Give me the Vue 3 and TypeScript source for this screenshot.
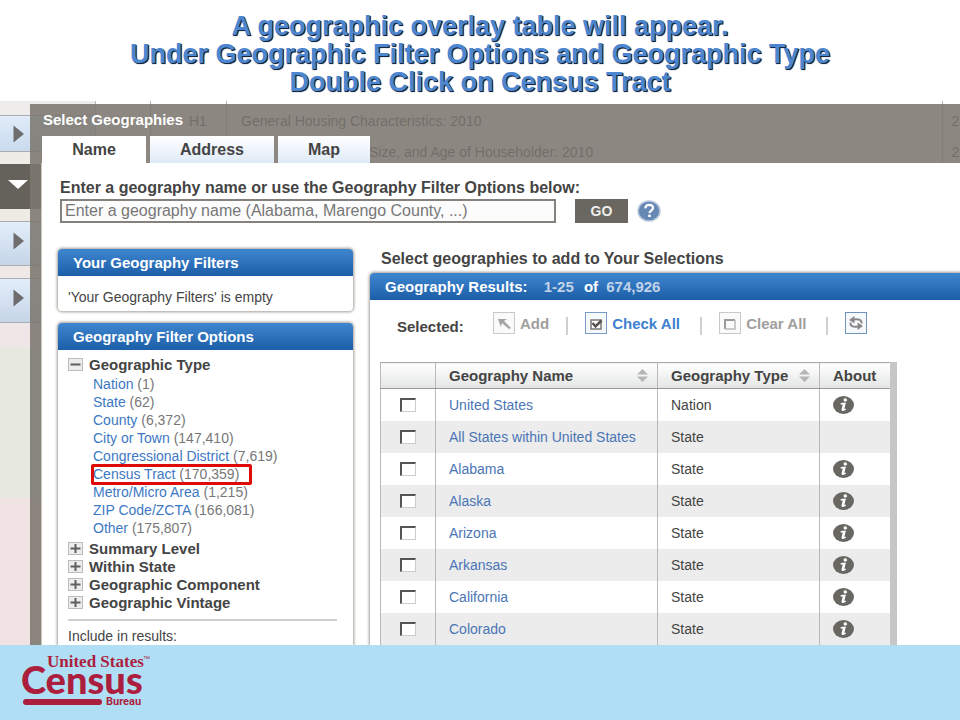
<script setup lang="ts">
import { ref } from 'vue'

interface TypeOption {
  name: string
  count: string
  marked?: boolean
}

interface Geography {
  name: string
  type: string
  info: boolean
}

const tabs = ['Name', 'Address', 'Map']
const activeTab = ref('Name')
const query = ref('Enter a geography name (Alabama, Marengo County, ...)')

const typeOptions: TypeOption[] = [
  { name: 'Nation', count: '1' },
  { name: 'State', count: '62' },
  { name: 'County', count: '6,372' },
  { name: 'City or Town', count: '147,410' },
  { name: 'Congressional District', count: '7,619' },
  { name: 'Census Tract', count: '170,359', marked: true },
  { name: 'Metro/Micro Area', count: '1,215' },
  { name: 'ZIP Code/ZCTA', count: '166,081' },
  { name: 'Other', count: '175,807' },
]

const closedGroups = ['Summary Level', 'Within State', 'Geographic Component', 'Geographic Vintage']

const geographies: Geography[] = [
  { name: 'United States', type: 'Nation', info: true },
  { name: 'All States within United States', type: 'State', info: false },
  { name: 'Alabama', type: 'State', info: true },
  { name: 'Alaska', type: 'State', info: true },
  { name: 'Arizona', type: 'State', info: true },
  { name: 'Arkansas', type: 'State', info: true },
  { name: 'California', type: 'State', info: true },
  { name: 'Colorado', type: 'State', info: true },
]

const checked = ref<string[]>([])
</script>

<template>
  <div class="slide">
    <header class="headline">
      <h1>
        A geographic overlay table will appear.<br />
        Under Geographic Filter Options and Geographic Type<br />
        Double Click on Census Tract
      </h1>
    </header>

    <main class="stage">
      <div class="backdrop">
        <nav class="rail">
          <button class="rail-item" type="button" aria-label="Expand topics">
            <svg width="12" height="18" viewBox="0 0 12 18"><path d="M0.5 0.5 11 9 0.5 17.5Z" fill="#6f6c6e" /></svg>
          </button>
          <button class="rail-item current" type="button" aria-label="Collapse geographies">
            <svg width="20" height="9" viewBox="0 0 20 9"><path d="M0 0H20L10 9Z" fill="#fff" /></svg>
          </button>
          <button class="rail-item" type="button" aria-label="Expand race groups">
            <svg width="12" height="18" viewBox="0 0 12 18"><path d="M0.5 0.5 11 9 0.5 17.5Z" fill="#6f6c6e" /></svg>
          </button>
          <button class="rail-item" type="button" aria-label="Expand industry codes">
            <svg width="12" height="18" viewBox="0 0 12 18"><path d="M0.5 0.5 11 9 0.5 17.5Z" fill="#6f6c6e" /></svg>
          </button>
          <div class="rail-rest"></div>
        </nav>
        <table class="under">
          <colgroup><col class="u-check" /><col class="u-id" /><col /><col class="u-year" /></colgroup>
          <tbody>
            <tr><td><span class="u-box"></span></td><td class="u-code">H1</td><td>General Housing Characteristics: 2010</td><td class="u-last">2</td></tr>
            <tr><td></td><td></td><td class="u-tail">Size, and Age of Householder: 2010</td><td class="u-last">2</td></tr>
          </tbody>
        </table>
      </div>

      <section class="dialog">
        <h2 class="dialog-title">Select Geographies</h2>
        <div class="tabs" role="tablist">
          <button
            v-for="tab in tabs"
            :key="tab"
            type="button"
            role="tab"
            class="tab"
            :class="[tab.toLowerCase(), { active: tab === activeTab }]"
            :aria-selected="tab === activeTab"
            @click="activeTab = tab"
          >{{ tab }}</button>
        </div>

        <div class="sheet">
          <form class="search" @submit.prevent>
            <label for="geo-name">Enter a geography name or use the Geography Filter Options below:</label>
            <div class="search-row">
              <input id="geo-name" v-model="query" type="text" />
              <button class="go" type="submit">GO</button>
              <button class="plain help" type="button" aria-label="Help">
                <svg width="24" height="22" viewBox="0 0 24 22">
                  <ellipse cx="12" cy="11" rx="11" ry="10" fill="#6688b4" stroke="#b9c9dd" stroke-width="1.5" />
                  <path d="M8.3 8.4C8.5 5.8 10 4.9 12.1 4.9c2.200 0 3.900 1.100 3.900 3.100 0 2.500-3.500 2.600-3.500 5" fill="none" stroke="#fff" stroke-width="2.200" />
                  <rect x="11.200" y="14.600" width="2.600" height="2.400" fill="#fff" />
                </svg>
              </button>
            </div>
          </form>

          <div class="columns">
            <aside class="filters">
              <section class="card">
                <h3 class="bar">Your Geography Filters</h3>
                <p class="empty">'Your Geography Filters' is empty</p>
              </section>
              <section class="card options">
                <h3 class="bar">Geography Filter Options</h3>
                <div class="tree">
                  <div>
                    <button class="plain group" type="button" aria-expanded="true">
                      <svg width="15" height="13" viewBox="0 0 15 13"><rect x="0.5" y="0.5" width="14" height="12" fill="#ededed" stroke="#bcbcbc" /><path d="M2.500 6.500h10" stroke="#605f5d" stroke-width="2" /></svg>
                      Geographic Type
                    </button>
                    <ul>
                      <li v-for="option in typeOptions" :key="option.name">
                        <span :class="{ marked: option.marked }"><a href="#">{{ option.name }}</a> ({{ option.count }})</span>
                      </li>
                    </ul>
                  </div>
                  <button v-for="group in closedGroups" :key="group" class="plain group" type="button" aria-expanded="false">
                    <svg width="15" height="13" viewBox="0 0 15 13"><rect x="0.5" y="0.5" width="14" height="12" fill="#ededed" stroke="#bcbcbc" /><path d="M2.500 6.500h10M7.500 2v9" stroke="#605f5d" stroke-width="2" /></svg>
                    {{ group }}
                  </button>
                </div>
                <p class="include">Include in results:</p>
              </section>
            </aside>

            <section class="results">
              <h3 class="hint">Select geographies to add to Your Selections</h3>
              <div class="results-card">
                <h3 class="bar">Geography Results: <span class="num range">1-25</span> of <span class="num">674,926</span></h3>
                <div class="toolbar">
                  <span class="selected">Selected:</span>
                  <button class="plain tool" type="button" disabled>
                    <svg width="22" height="22" viewBox="0 0 22 22"><rect x="0.5" y="0.5" width="21" height="21" fill="#fafafa" stroke="#c9c9c9" /><path d="M5 7h9l-3 2 7 7-2 1-7-6-1 4Z" fill="#a5a3a1" /></svg>
                    Add
                  </button>
                  <i class="rule"></i>
                  <button class="plain tool on" type="button" @click="checked = geographies.map((g) => g.name)">
                    <svg width="22" height="22" viewBox="0 0 22 22"><rect x="0.5" y="0.5" width="21" height="21" fill="#f6f9fc" stroke="#7b9cc9" /><rect x="6" y="8" width="10" height="9" fill="#fff" stroke="#777" stroke-width="1.500" /><path d="M7.500 11 10.500 14.500 16.500 8.500" fill="none" stroke="#55524f" stroke-width="2.500" /></svg>
                    Check All
                  </button>
                  <i class="rule"></i>
                  <button class="plain tool clear" type="button" @click="checked = []">
                    <svg width="22" height="22" viewBox="0 0 22 22"><rect x="0.5" y="0.5" width="21" height="21" fill="#fafafa" stroke="#c9c9c9" /><path d="M6 17V8h10" fill="none" stroke="#9c9a98" stroke-width="2" /><path d="M16 8v9H6" fill="none" stroke="#bbb" stroke-width="1.500" /></svg>
                    Clear All
                  </button>
                  <i class="rule"></i>
                  <button class="plain tool" type="button" aria-label="Refresh">
                    <svg width="22" height="22" viewBox="0 0 22 22"><rect x="0.5" y="0.5" width="21" height="21" fill="#f6f9fc" stroke="#6f93bb" /><path d="M16.500 11.500C17 8 14 6.500 8.500 7.500" fill="none" stroke="#8a8886" stroke-width="2" /><path d="M9.500 4 4 8l5.500 3.500Z" fill="#8a8886" /><path d="M5.500 10.500C5 14 8 15.500 13 14.500" fill="none" stroke="#8a8886" stroke-width="2" /><path d="M12.500 18 18 14l-5.500-3.500Z" fill="#8a8886" /></svg>
                  </button>
                </div>

                <div class="table-frame">
                  <table class="grid">
                    <colgroup><col class="c-check" /><col class="c-name" /><col class="c-type" /><col class="c-about" /></colgroup>
                    <thead>
                      <tr>
                        <th></th>
                        <th><span class="sort">Geography Name <svg width="11" height="13" viewBox="0 0 11 13"><path d="M5.500 0 11 5.500H0ZM0 7.500h11L5.500 13Z" fill="#b5b5b5" /></svg></span></th>
                        <th><span class="sort">Geography Type <svg width="11" height="13" viewBox="0 0 11 13"><path d="M5.500 0 11 5.500H0ZM0 7.500h11L5.500 13Z" fill="#b5b5b5" /></svg></span></th>
                        <th>About</th>
                      </tr>
                    </thead>
                    <tbody>
                      <tr v-for="geo in geographies" :key="geo.name">
                        <td class="pick"><input v-model="checked" type="checkbox" :value="geo.name" :aria-label="geo.name" /></td>
                        <td><a href="#">{{ geo.name }}</a></td>
                        <td>{{ geo.type }}</td>
                        <td>
                          <button v-if="geo.info" class="plain info" type="button" :aria-label="'About ' + geo.name">
                            <svg width="21" height="18" viewBox="0 0 21 18">
                              <ellipse cx="10.500" cy="9" rx="10.500" ry="9" fill="#696762" />
                              <ellipse cx="12.300" cy="3.900" rx="1.800" ry="1.600" fill="#fff" />
                              <path d="M7.700 7.100 12.900 6.400 11.300 12.900 13 12.500 12.600 13.900Q8.600 16 8.500 13.700L9.700 8.500 7.500 8.500Z" fill="#fff" />
                            </svg>
                          </button>
                        </td>
                      </tr>
                    </tbody>
                  </table>
                </div>
              </div>
            </section>
          </div>
        </div>
      </section>
    </main>

    <footer class="foot">
      <svg class="logo" width="132" height="60" viewBox="0 -4 132 60" role="img" aria-label="United States Census Bureau">
        <g fill="#ab1e3e">
          <text class="l-us" x="26" y="13">United States</text>
          <text class="l-tm" x="122" y="7">™</text>
          <text class="l-census" x="0" y="40">Census</text>
          <text class="l-bureau" x="85" y="51">Bureau</text>
          <rect x="2" y="45" width="79" height="6" rx="3" />
        </g>
      </svg>
    </footer>
  </div>
</template>

<style>
body {
  background: #fff;
}
</style>

<style scoped>
.slide {
  display: flex;
  flex-direction: column;
  min-height: 100vh;
  font-family: "Liberation Sans", Arial, sans-serif;
  font-size: 14px;
  color: #444;
}

h1, h2, h3, p, ul {
  margin: 0;
  padding: 0;
}

a {
  color: #3d78c4;
  text-decoration: none;
}

button {
  font-family: inherit;
  cursor: pointer;
}

.plain {
  display: flex;
  align-items: center;
  padding: 0;
  border: 0;
  background: none;
}

svg {
  flex: none;
}

.headline {
  padding: 12px 0 5px;
  text-align: center;
}

.headline h1 {
  font-size: 27px;
  line-height: 28px;
  color: #4d86d0;
  text-shadow: 1px 1px 0 #14263f, 1px 1px 1px #14263f;
}

.stage {
  display: grid;
  flex: 1;
  grid-template-columns: minmax(0, 1fr);
}

.backdrop,
.dialog {
  grid-area: 1 / 1;
}

/* page behind the dialog */
.backdrop {
  display: flex;
  align-items: flex-start;
  overflow: hidden;
}

.rail {
  display: flex;
  flex-direction: column;
  gap: 12px;
  width: 95px;
  height: 100%;
  padding-top: 14px;
  box-sizing: border-box;
  background: linear-gradient(#eeedeb, #eeebe4 100px, #efe7e7 200px);
}

.rail-item {
  display: flex;
  align-items: center;
  flex: none;
  height: 45px;
  padding: 0 0 0 13px;
  border: solid #a9adb3;
  border-width: 1px 0;
  background: linear-gradient(#e3eefa, #c5d5e7);
}

.rail-item:first-child {
  height: 37px;
  background: linear-gradient(#e0ecf9, #c9daee);
}

.rail-item.current {
  padding-left: 8px;
  padding-bottom: 4px;
  border-color: #62605a;
  background: #65625b;
}

.rail-item:not(.current):not(:first-child) {
  padding-bottom: 5px;
}

.rail-rest {
  flex: 1;
  margin-top: 12px;
  background: linear-gradient(#e7e8e0 150px, #f1e3e3 152px);
}

.under {
  flex: 1;
  min-width: 0;
  table-layout: fixed;
  border-collapse: collapse;
  color: #222c3c;
}

.under td {
  height: 31px;
  padding: 0 0 0 14px;
  border-left: 1px solid #b5b5b5;
  white-space: nowrap;
  overflow: hidden;
}

.under tr:first-child td {
  height: 35px;
  padding-top: 4px;
  box-sizing: border-box;
}

.under .u-code {
  padding-left: 38px;
}

.under .u-tail {
  padding-left: 142px;
}

.under .u-last {
  padding-left: 9px;
}

.u-check {
  width: 55px;
}

.u-id {
  width: 76px;
}

.u-year {
  width: 18px;
}

.u-box {
  display: block;
  width: 16px;
  height: 3px;
  margin-left: 4px;
  background: #333;
}

/* dialog */
.dialog {
  display: flex;
  flex-direction: column;
  min-width: 0;
  margin: 3px 0 0 30px;
  padding-left: 11px;
  background: rgba(124, 120, 112, 0.88);
}

.dialog-title {
  padding: 6px 0 6px 2px;
  font-size: 15px;
  line-height: 20px;
  color: #fff;
}

.tabs {
  display: flex;
  gap: 4px;
  padding-left: 1px;
}

.tab {
  height: 27px;
  padding: 0;
  border: 0;
  background: linear-gradient(#fff, #dfeaf7);
  font-size: 16px;
  font-weight: bold;
  color: #444;
}

.tab.active {
  background: #fff;
}

.tab.name {
  width: 104px;
}

.tab.address {
  width: 124px;
}

.tab.map {
  width: 92px;
}

.sheet {
  flex: 1;
  padding: 15px 0 0 16px;
  border-left: 1px solid #c9c6c2;
  background: #fff;
}

.search {
  padding-left: 2px;
}

.search label {
  display: block;
  font-size: 16px;
  font-weight: bold;
  line-height: 20px;
}

.search-row {
  display: flex;
  align-items: center;
  margin-top: 1px;
}

.search-row input {
  width: 496px;
  height: 24px;
  padding: 0 3px;
  border: 2px solid #85827d;
  box-sizing: border-box;
  background: #fcfcfc;
  font: 16px "Liberation Sans", Arial, sans-serif;
  color: #777;
}

.go {
  width: 53px;
  height: 24px;
  margin: 0 9px 0 19px;
  padding: 0;
  border: 0;
  background: #6a6760;
  font-size: 14px;
  font-weight: bold;
  color: #eee;
}

.columns {
  display: grid;
  grid-template-columns: 295px minmax(0, 1fr);
  gap: 17px;
  margin-top: 26px;
}

.bar {
  height: 27px;
  padding-left: 15px;
  border-radius: 4px 4px 0 0;
  background: linear-gradient(#3f86cf, #1c5ea8);
  font-size: 15px;
  line-height: 27px;
  color: #fff;
}

.filters {
  display: flex;
  flex-direction: column;
  gap: 12px;
}

.card {
  border-radius: 4px;
  background: #fff;
  box-shadow: 0 0 3px 1px #a39d96;
}

.card.options {
  flex: 1;
  border-radius: 4px 4px 0 0;
  clip-path: inset(-4px -4px 0);
}

.empty {
  padding: 13px 0 6px 10px;
  line-height: 16px;
}

.tree {
  display: flex;
  flex-direction: column;
  margin: 0 16px 0 10px;
  padding: 5px 0 8px;
  border-bottom: 2px solid #cfcfcf;
}

.group {
  gap: 6px;
  height: 18px;
  font-size: 15px;
  font-weight: bold;
  color: #444;
}

.tree ul {
  padding: 2px 0 2px 25px;
  list-style: none;
}

.tree li {
  height: 18px;
  line-height: 18px;
  color: #777;
}

.marked {
  position: relative;
}

.marked::after {
  content: "";
  position: absolute;
  inset: -2px -13px -3px -2px;
  border: 3px solid #dd0a08;
  border-radius: 2px;
}

.include {
  padding: 6px 0 0 10px;
  line-height: 18px;
}

.results {
  display: flex;
  flex-direction: column;
}

.hint {
  padding: 0 0 4px 11px;
  font-size: 16px;
  line-height: 20px;
}

.results-card {
  flex: 1;
  border-radius: 4px 0 0;
  box-shadow: 0 0 3px 1px #a39d96;
  clip-path: inset(-4px 0 0 -4px);
}

.results-card .bar {
  border-radius: 4px 0 0;
}

.num {
  color: #c3d3e8;
}

.range {
  margin: 0 6px 0 12px;
}

.num:last-child {
  margin-left: 4px;
}

.toolbar {
  display: flex;
  align-items: center;
  padding: 12px 0 0 27px;
  height: 22px;
  font-size: 15px;
  font-weight: bold;
}

.selected {
  width: 96px;
  padding-top: 6px;
}

.tool {
  gap: 5px;
  font-size: 15px;
  font-weight: bold;
  color: #a09e9c;
}

.tool.on {
  width: 98px;
  color: #3f80d0;
}

.tool.clear {
  width: 90px;
}

.rule {
  width: 2px;
  height: 18px;
  margin: 6px 17px 0;
  background: #cfcfcf;
}

.table-frame {
  width: 510px;
  margin: 28px 0 0 10px;
  border-right: 7px solid #c6c6c6;
}

.grid {
  width: 100%;
  table-layout: fixed;
  border-collapse: collapse;
}

.grid th,
.grid td {
  padding: 0 0 0 13px;
  border-left: 1px solid #b9b9b9;
  text-align: left;
  white-space: nowrap;
}

.grid th {
  height: 25px;
  border-top: 1px solid #aaa;
  border-bottom: 1px solid #999;
  background: linear-gradient(#fff, #e3e5e4);
  font-size: 15px;
}

.grid td {
  height: 32px;
}

.grid a {
  color: #4a75b5;
}

.grid tbody tr:nth-child(even) {
  background: #ececec;
}

.c-check {
  width: 55px;
}

.c-name {
  width: 222px;
}

.c-type {
  width: 162px;
}

.sort {
  display: flex;
  align-items: center;
  justify-content: space-between;
  padding-right: 9px;
}

.grid .pick {
  padding-left: 19px;
}

.pick input {
  display: block;
  width: 16px;
  height: 14px;
  margin: 0;
  appearance: none;
  border: solid #ccc;
  border-width: 2px 1px 1px 2px;
  border-top-color: #555;
  border-left-color: #555;
  background: #fff;
}

.pick input:checked {
  background: #7b9cc9;
}

/* footer */
.foot {
  display: flex;
  height: 75px;
  padding: 5px 0 0 21px;
  box-sizing: border-box;
  background: #b0dff5;
}

.l-us {
  font: bold 17px "Liberation Serif", serif;
}

.l-tm {
  font: 7px "Liberation Sans", sans-serif;
}

.l-census {
  font: 900 38px Lato, sans-serif;
}

.l-bureau {
  font: bold 11px Roboto, sans-serif;
}
</style>
